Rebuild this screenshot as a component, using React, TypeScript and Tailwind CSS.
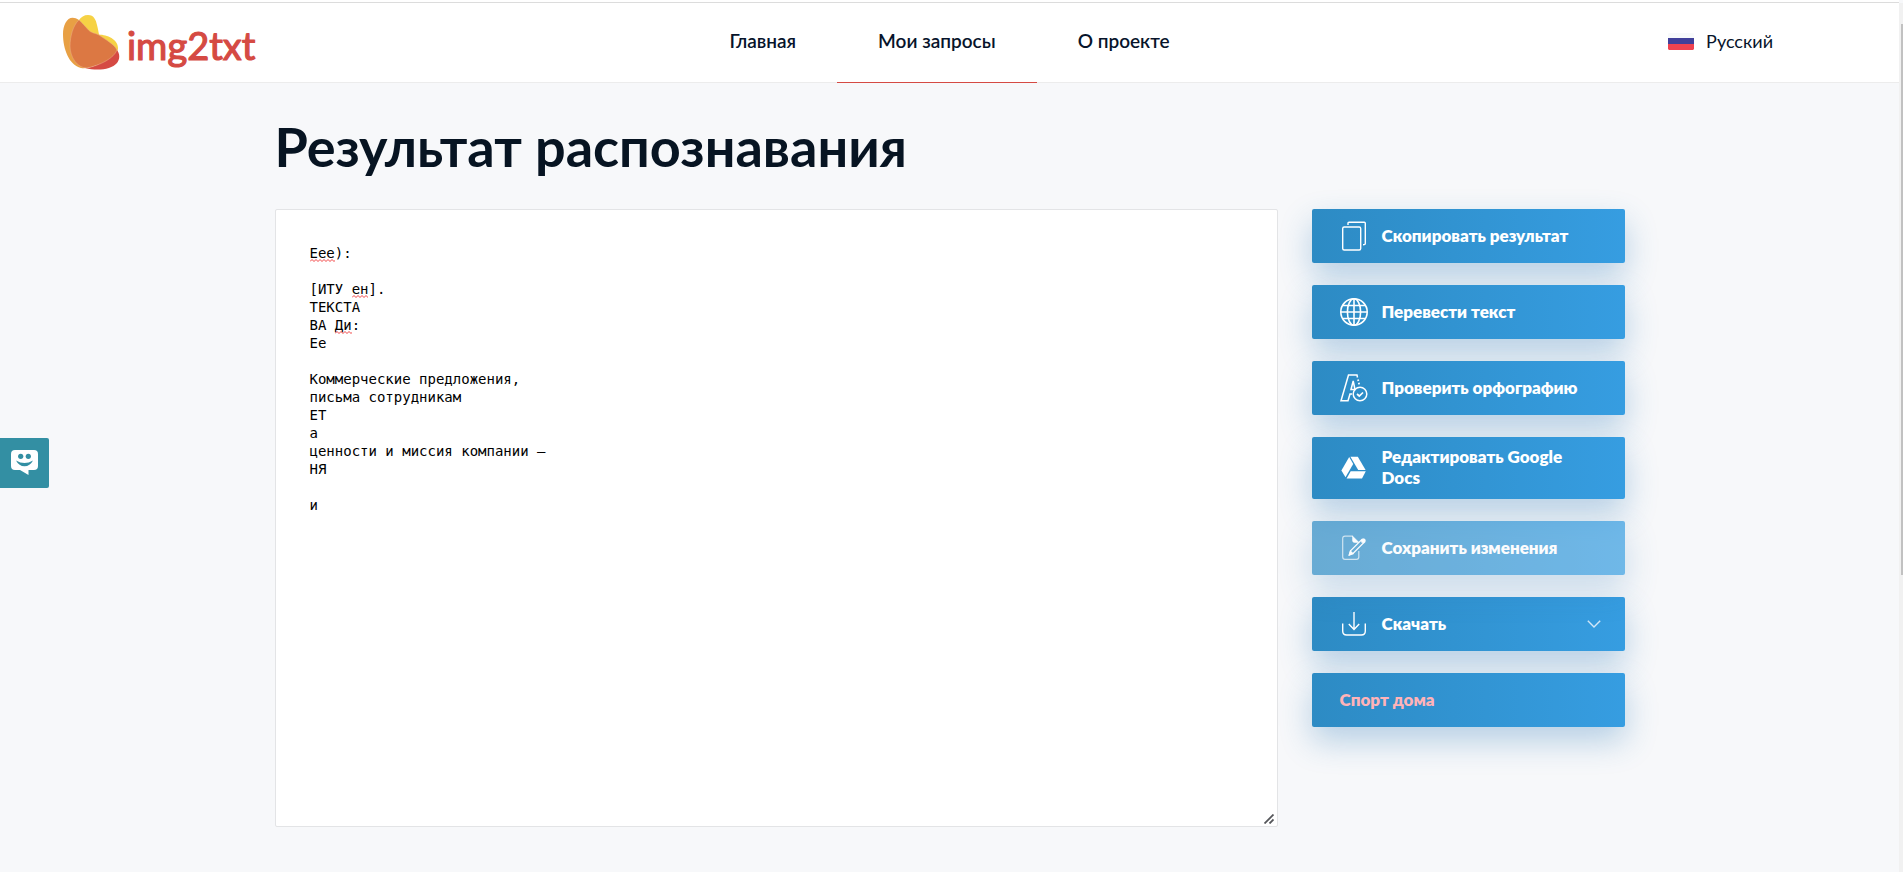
import type { ReactNode } from "react";

const RESULT_TEXT = `Еее):

[ИТУ ен].
ТЕКСТА
ВА Ди:
Ее

Коммерческие предложения,
письма сотрудникам
ЕТ
а
ценности и миссия компании —
НЯ

и
`;

const LINE_HEIGHT = 18;

const MISSPELLED = [
  { row: 0, col: 0, length: 3 },
  { row: 2, col: 5, length: 2 },
  { row: 4, col: 3, length: 2 },
];

function Logo() {
  return (
    <svg width="196" height="60" viewBox="0 0 196 60" role="img" aria-label="img2txt">
      <path
        d="M16 7C18 4 21 2 25 2C31 2 33 7 34 12C35 16 35.5 19 36 21.500C44 22 55 26 55 35C55 37 54.500 38 54 38L25 34Z"
        fill="#f6d245"
      />
      <path
        d="M24 55C38 52 48 44 54 37C57 41 57 46 54 50C48 57 34 58 22 55Z"
        fill="#d54a43"
      />
      <path
        d="M16 7C6 0 0 10 0 21C0 36 6 52 18 55C26 57 30 50 30 40C34 30 24 14 16 7Z"
        fill="#e8a044"
      />
      <path
        d="M16 7C10 12 7 24 7 33C7 44 14 55 24 55C38 52 51 45 54 37C51 31 43 27 36 22C32 20 28 20 25.500 17C22 13 19 10 16 7Z"
        fill="#dc7843"
        stroke="#ecae86"
        strokeWidth="0.5"
      />
      <text
        x="64"
        y="47"
        fontSize="38"
        fontFamily="Lato, sans-serif"
        fill="#d54a43"
        stroke="#d54a43"
        strokeWidth="1.2"
        strokeLinejoin="round"
      >
        img2txt
      </text>
    </svg>
  );
}

function RussianFlag() {
  return (
    <svg width="26" height="17" viewBox="0 0 26 17" aria-hidden="true">
      <path d="M1 0H25L26 1V6H0V1Z" fill="#f8fafb" />
      <path d="M0 5H26V11H0Z" fill="#41409a" />
      <path d="M0 11H26V16L25 17H1L0 16Z" fill="#ef4350" />
    </svg>
  );
}

function CopyIcon() {
  return (
    <svg width="28" height="30" viewBox="0 0 28 30" fill="none" stroke="#fff" strokeWidth="1.4" aria-hidden="true">
      <rect x="2.7" y="6" width="18" height="23" rx="1.5" />
      <path d="M8 4V2.2Q8 1.2 9 1.2H24.3Q25.3 1.2 25.3 2.2V22.5Q25.3 23.7 23 23.7" />
    </svg>
  );
}

function GlobeIcon() {
  return (
    <svg width="28" height="28" viewBox="0 0 28 28" fill="none" stroke="#fff" strokeWidth="1.6" aria-hidden="true">
      <circle cx="14" cy="14" r="13.2" />
      <ellipse cx="14" cy="14" rx="6.6" ry="13.2" />
      <path d="M14 1V27M1 14H27M3 7.5H25M3 20.5H25" />
    </svg>
  );
}

function SpellIcon() {
  return (
    <svg width="28" height="28" viewBox="0 0 28 28" fill="none" stroke="#fff" strokeWidth="1.5" aria-hidden="true">
      <path d="M17.5 3.5L17 1H8.5L1 26.8H8L10 20H12" />
      <path d="M11 15.5L13.2 7L15 15.5H11Z" />
      <path d="M18 5.5L19.5 12" strokeDasharray="1.6 1.8" strokeWidth="1.8" />
      <circle cx="20" cy="20" r="6.8" />
      <path d="M17 20L19.3 22L23 18.5" strokeWidth="1.7" />
    </svg>
  );
}

function DriveIcon() {
  return (
    <svg width="28" height="24" viewBox="0 0 28 24" fill="#fff" aria-hidden="true">
      <path d="M9.2 1L13.2 8L5.5 21.3L1.4 14.5Z" />
      <path d="M10.4 0.8H17.8L25.6 14H18.2Z" />
      <path d="M10.7 15.3H25.8L22 22.5H6.6Z" />
    </svg>
  );
}

function SaveIcon() {
  return (
    <svg width="28" height="26" viewBox="0 0 28 26" fill="none" stroke="#fff" aria-hidden="true">
      <path d="M13 1.2H5Q2.7 1.2 2.7 3.5V22Q2.7 24.3 5 24.3H16.5Q18.8 24.3 18.8 22V16" strokeWidth="1.2" opacity="0.7" />
      <path d="M12.5 1L19 7.5H14.5Q12.5 7.5 12.5 5.5Z" fill="#fff" strokeWidth="0.5" />
      <path d="M9.2 20L10.5 15.8L21.5 4.8L24 7.5L13 18.5Z" strokeWidth="1.2" />
      <path d="M9 20.4L10.3 15.6L13.6 18.8Z" fill="#fff" strokeWidth="0.5" />
      <circle cx="23.3" cy="5.8" r="2.3" fill="#fff" strokeWidth="0.3" />
    </svg>
  );
}

function DownloadIcon() {
  return (
    <svg width="28" height="26" viewBox="0 0 28 26" fill="none" stroke="#fff" strokeWidth="1.4" aria-hidden="true">
      <path d="M2.7 12.5V20Q2.7 24 6.7 24H21.3Q25.3 24 25.3 20V12.5" />
      <path d="M14 1V18M8.8 13L14 18.4L19.2 13" />
    </svg>
  );
}

function ChevronIcon() {
  return (
    <svg width="14" height="8" viewBox="0 0 14 8" fill="none" stroke="#d2e7f8" strokeWidth="1.4" aria-hidden="true">
      <path d="M0.8 0.8L7 7L13.2 0.8" />
    </svg>
  );
}

function ActionButton({
  icon,
  trailing,
  disabled,
  children,
}: {
  icon?: ReactNode;
  trailing?: ReactNode;
  disabled?: boolean;
  children: ReactNode;
}) {
  return (
    <button
      type="button"
      disabled={disabled}
      className="flex min-h-[54px] w-full items-center gap-[14px] rounded-xs bg-linear-to-r from-[#2d8bc4] to-[#369de1] py-[9px] pr-6 pl-7 text-left text-[17px] leading-[21px] font-extrabold text-white shadow-[0_14px_32px_rgba(45,120,185,0.32)] disabled:opacity-70"
    >
      {icon}
      <span className="flex-1 pb-[2px]">{children}</span>
      {trailing}
    </button>
  );
}

function Squiggle({ row, col, length }: { row: number; col: number; length: number }) {
  return (
    <svg
      className="absolute h-[3px]"
      style={{ left: `${col}ch`, top: `${row * LINE_HEIGHT + 15}px`, width: `${length}ch` }}
    >
      <path
        d="M0 2.5L2 0.5L4 2.5L6 0.5L8 2.5L10 0.5L12 2.5L14 0.5L16 2.5L18 0.5L20 2.5L22 0.5L24 2.5L26 0.5"
        fill="none"
        stroke="#f03030"
        strokeWidth="0.9"
      />
    </svg>
  );
}

export default function App() {
  return (
    <div className="relative min-h-screen bg-[#f7f8fa] pr-1 font-['Lato','Open_Sans',sans-serif] text-[#07142b]">
      <header className="grid h-[83px] grid-cols-[1fr_auto_1fr] items-stretch border-b border-[#ececec] bg-white shadow-[inset_0_2px_0_#fff,inset_0_3px_0_#dcdcdc]">
        <div className="flex items-center pl-[63px]">
          <a href="#" className="pt-1">
            <Logo />
          </a>
        </div>
        <nav className="-mb-px flex text-[19px] font-semibold">
          <a href="#" className="flex items-center px-[41px]">
            Главная
          </a>
          <a href="#" aria-current="page" className="flex items-center border-b border-[#d54a43] px-[41px]">
            Мои запросы
          </a>
          <a href="#" className="flex items-center px-[41px]">
            О проекте
          </a>
        </nav>
        <div className="flex items-center justify-end pr-[126px]">
          <button type="button" className="flex items-center gap-3 text-[18px]">
            <RussianFlag />
            Русский
          </button>
        </div>
      </header>

      <main className="mx-auto max-w-[1350px] pt-8 pb-11">
        <h1 className="mb-[30px] text-[54px] leading-[64px] font-bold text-[#071422]">Результат распознавания</h1>
        <div className="flex items-start gap-[34px]">
          <div className="relative flex flex-1 font-['DejaVu_Sans_Mono',monospace] text-[14px] leading-[18px] text-black">
            <textarea
              aria-label="Результат распознавания"
              spellCheck={false}
              defaultValue={RESULT_TEXT}
              className="h-[618px] w-full resize-none rounded-xs border border-[#e3e4e6] bg-white px-[34px] py-[34px] outline-none"
            />
            <div aria-hidden="true" className="pointer-events-none absolute top-[35px] left-[35px]">
              {MISSPELLED.map((mark) => (
                <Squiggle key={mark.row} {...mark} />
              ))}
            </div>
            <svg
              width="10"
              height="10"
              viewBox="0 0 10 10"
              aria-hidden="true"
              className="pointer-events-none absolute right-1 bottom-[3px]"
            >
              <path d="M0.500 9.500L9.500 0.500M5.500 9.500L9.500 5.500" stroke="#55565a" strokeWidth="1.8" />
            </svg>
          </div>
          <aside className="flex w-[313px] flex-col gap-[22px]">
            <ActionButton icon={<CopyIcon />}>Скопировать результат</ActionButton>
            <ActionButton icon={<GlobeIcon />}>Перевести текст</ActionButton>
            <ActionButton icon={<SpellIcon />}>Проверить орфографию</ActionButton>
            <ActionButton icon={<DriveIcon />}>Редактировать Google Docs</ActionButton>
            <ActionButton icon={<SaveIcon />} disabled>
              Сохранить изменения
            </ActionButton>
            <ActionButton icon={<DownloadIcon />} trailing={<ChevronIcon />}>
              Скачать
            </ActionButton>
            <ActionButton>
              <span className="text-[#ffb3b8]">Спорт дома</span>
            </ActionButton>
          </aside>
        </div>
      </main>

      <button
        type="button"
        aria-label="Обратная связь"
        className="fixed top-[438px] left-0 flex h-[50px] w-[49px] items-center rounded-r-xs bg-[#338fa3] pl-[11px]"
      >
        <svg width="27" height="26" viewBox="0 0 27 26" aria-hidden="true">
          <path d="M4 0H23Q27 0 27 4V16Q27 20 23 20H17.5V25L9 20H4Q0 20 0 16V4Q0 0 4 0Z" fill="#fff" />
          <circle cx="9.7" cy="6.3" r="2.6" fill="#338fa3" />
          <circle cx="17.3" cy="6.3" r="2.6" fill="#338fa3" />
          <path d="M5 10.5Q13.5 15.5 22 10.5Q19 16.3 13.5 16.3Q8 16.3 5 10.5Z" fill="#338fa3" />
        </svg>
      </button>

      <div aria-hidden="true" className="fixed top-[3px] right-0 bottom-0 w-1 bg-[#f1f1f1] pt-[21px] pl-[2px]">
        <div className="h-[65%] bg-[#c1c1c1]" />
      </div>
    </div>
  );
}
